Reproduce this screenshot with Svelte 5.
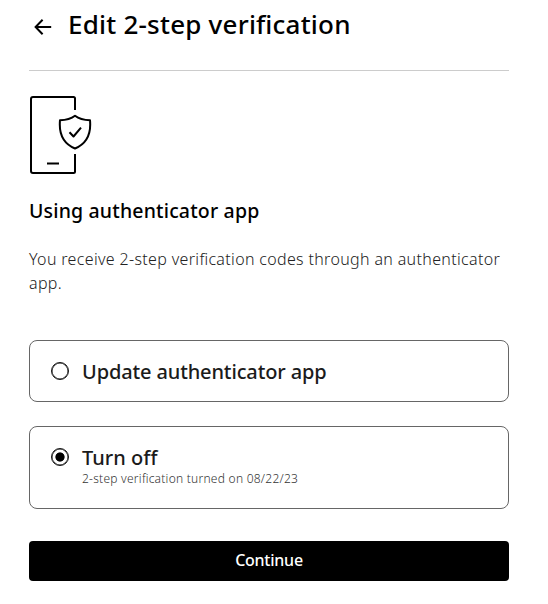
<script>
  let selected = $state('off');
</script>

<main>
  <header>
    <button class="back" aria-label="Back">
      <svg width="18" height="16" viewBox="0 0 18 16" fill="none" stroke="#000" stroke-width="2">
        <path d="M17.2 8H1.8M8.6 .8 1.6 8l7 7.2" />
      </svg>
    </button>
    <h1>Edit 2-step verification</h1>
  </header>

  <svg class="device" width="64" height="80" viewBox="0 0 64 80" fill="none" stroke="#000" stroke-width="2" stroke-linejoin="round">
    <path d="M46 15V3.5Q46 2 44.5 2H4Q2 2 2 4V76Q2 78 4 78H44.5Q46 78 46 76.500V59M18 68.500H30" />
    <path d="M46 20.700Q40.500 25 31 25.200C29.800 38 34 48.500 46 53.500C58 48.500 62.200 38 61 25.200Q51.500 25 46 20.700Z" />
    <path d="m40.500 37.200 4 4.300 7.500-8.800" />
  </svg>

  <h2>Using authenticator app</h2>
  <p class="intro">You receive 2-step verification codes through an authenticator app.</p>

  <label class="option">
    <input type="radio" name="action" value="update" bind:group={selected} />
    <span class="title update">Update authenticator app</span>
  </label>

  <label class="option second">
    <input type="radio" name="action" value="off" bind:group={selected} />
    <span class="copy">
      <span class="title">Turn off</span>
      <span class="detail">2-step verification turned on 08/22/23</span>
    </span>
  </label>

  <button class="continue">Continue</button>
</main>

<style>
  :global(body) { margin: 0; background: #fff; }
  main {
    box-sizing: border-box;
    width: 548px;
    height: 604px;
    padding: 0 39px 0 29px;
    font-family: "Noto Sans", "Open Sans", sans-serif;
    font-feature-settings: "liga" 1;
    color: #000;
    overflow: hidden;
  }
  header {
    display: flex;
    box-sizing: border-box;
    height: 71px;
    border-bottom: 1px solid #ccc;
  }
  .back {
    display: flex;
    width: 39px;
    height: 16px;
    margin-top: 19px;
    padding: 0 0 0 5px;
    border: 0;
    background: none;
  }
  h1 {
    margin: 6px 0 0;
    font-size: 26px;
    line-height: 36px;
    font-weight: 500;
    letter-spacing: 0.22px;
    white-space: nowrap;
  }
  .device { display: block; margin-top: 24px; }
  h2 {
    margin: 22px 0 0;
    font-size: 19.500px;
    line-height: 28px;
    font-weight: 500;
    letter-spacing: 0.17px;
    white-space: nowrap;
  }
  .intro {
    margin: 22px 0 0;
    height: 48px;
    font-size: 16px;
    line-height: 24px;
    font-weight: 300;
    letter-spacing: 0.34px;
    color: #222;
  }
  .option {
    display: flex;
    box-sizing: border-box;
    height: 62px;
    margin-top: 45px;
    padding: 21px 20px 0 21px;
    border: 1px solid #666;
    border-radius: 8px;
  }
  .second { height: 83px; margin-top: 24px; }
  input {
    flex: none;
    appearance: none;
    box-sizing: border-box;
    width: 18px;
    height: 18px;
    margin: 0 13px 0 0;
    border: 1px solid #111;
    border-radius: 50%;
    background: #fff;
    box-shadow: inset 0 0 0 0.5px #111;
  }
  input:checked { background: radial-gradient(circle, #000 4.200px, transparent 5px); }
  .title {
    display: block;
    margin-top: -4px;
    font-size: 20px;
    line-height: 28px;
    font-weight: 500;
    color: #1b1b1b;
    white-space: nowrap;
  }
  .update { letter-spacing: -0.13px; }
  .copy { display: block; }
  .detail {
    display: block;
    margin-top: -1px;
    font-size: 12px;
    line-height: 16px;
    font-weight: 300;
    letter-spacing: 0.25px;
    color: #333;
    white-space: nowrap;
  }
  .continue {
    display: block;
    width: 480px;
    height: 40px;
    margin-top: 32px;
    padding: 0 0 2px;
    border: 0;
    border-radius: 4px;
    background: #000;
    color: #fff;
    font: 500 16px/38px "Noto Sans", "Open Sans", sans-serif;
    letter-spacing: -0.25px;
  }
</style>
